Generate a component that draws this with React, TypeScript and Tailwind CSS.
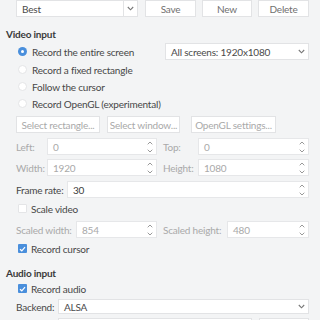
import React from "react";

const Chevron = () => (
  <svg width="7" height="5" viewBox="0 0 7 5">
    <path d="M0.8 1 L3.5 3.8 L6.2 1" fill="none" stroke="#777" strokeWidth="1.1" />
  </svg>
);

const SpinArrows = () => (
  <div className="flex flex-col items-center justify-center gap-[4px] pr-[3px]">
    <svg width="6" height="4" viewBox="0 0 6 4">
      <path d="M0.7 3.3 L3 1 L5.3 3.3" fill="none" stroke="#999" strokeWidth="1" />
    </svg>
    <svg width="6" height="4" viewBox="0 0 6 4">
      <path d="M0.7 0.7 L3 3 L5.3 0.7" fill="none" stroke="#999" strokeWidth="1" />
    </svg>
  </div>
);

function Combo({ text, className = "", sep = false }: { text: string; className?: string; sep?: boolean }) {
  return (
    <div className={`flex h-full items-center justify-between border border-[#e2e3e5] bg-white pl-[5px] ${className}`}>
      <span className="text-[#4a4a4a]">{text}</span>
      <div className={`flex h-full items-center px-[3px] ${sep ? "border-l border-[#e2e3e5]" : ""}`}>
        <Chevron />
      </div>
    </div>
  );
}

function Btn({ text, className = "", dim = false }: { text: string; className?: string; dim?: boolean }) {
  return (
    <div className={`flex h-full items-center justify-center border border-[#e2e3e5] bg-white ${dim ? "text-[#a9a9a9]" : "text-[#707070]"} ${className}`}>
      {text}
    </div>
  );
}

function Spin({ value, className = "", dim = true }: { value: string; className?: string; dim?: boolean }) {
  return (
    <div className={`flex h-full items-center justify-between border border-[#e6e7e9] bg-white pl-[5px] ${className}`}>
      <span className={dim ? "text-[#a9a9a9]" : "text-[#3c3c3c]"}>{value}</span>
      <SpinArrows />
    </div>
  );
}

function Radio({ label, checked = false }: { label: string; checked?: boolean }) {
  return (
    <div className="flex h-[17px] items-center pl-[18px]">
      {checked ? (
        <div className="flex h-[9px] w-[9px] items-center justify-center rounded-full bg-[#4a8fdc]">
          <div className="h-[3px] w-[3px] rounded-full bg-white" />
        </div>
      ) : (
        <div className="h-[9px] w-[9px] rounded-full border border-[#e4e5e7] bg-white" />
      )}
      <span className="ml-[5px] text-[#474747]">{label}</span>
    </div>
  );
}

function Check({ label, checked = false }: { label: string; checked?: boolean }) {
  return (
    <div className="flex h-[17px] items-center pl-[18px]">
      {checked ? (
        <div className="flex h-[9px] w-[9px] items-center justify-center rounded-[1px] bg-[#4a8fdc]">
          <svg width="7" height="6" viewBox="0 0 7 6">
            <path d="M1 3.2 L2.8 4.8 L6 1.2" fill="none" stroke="white" strokeWidth="1.2" />
          </svg>
        </div>
      ) : (
        <div className="h-[9px] w-[9px] rounded-[1px] border border-[#e4e5e7] bg-white" />
      )}
      <span className="ml-[4px] text-[#474747]">{label}</span>
    </div>
  );
}

export default function App() {
  return (
    <div
      className="h-[320px] w-[320px] overflow-hidden whitespace-nowrap bg-[#f3f4f5] text-[10px] leading-none tracking-[-0.2px]"
      style={{ fontFamily: 'Lato, "Noto Sans", sans-serif' }}
    >
      {/* presets */}
      <div className="flex h-[17px] pl-[16px]">
        <Combo text="Best" className="w-[122px]" sep />
        <Btn text="Save" className="ml-[7px] w-[51px]" />
        <Btn text="New" className="ml-[6px] w-[50px]" />
        <Btn text="Delete" className="ml-[6px] w-[51px]" />
      </div>

      <div className="mt-[9px] flex h-[16px] items-center pl-[6px] font-bold text-[#3a3a3a]">Video input</div>

      <div className="mt-[1px] flex h-[17px] items-center">
        <div className="w-[165px]">
          <Radio label="Record the entire screen" checked />
        </div>
        <Combo text="All screens: 1920x1080" className="h-[16px] w-[144px]" />
      </div>
      <div className="mt-[1px]">
        <Radio label="Record a fixed rectangle" />
      </div>
      <Radio label="Follow the cursor" />
      <Radio label="Record OpenGL (experimental)" />

      <div className="mt-[4px] flex h-[17px] pl-[16px]">
        <Btn text="Select rectangle..." dim className="w-[84px]" />
        <Btn text="Select window..." dim className="ml-[7px] w-[73px]" />
        <Btn text="OpenGL settings..." dim className="ml-[11px] w-[85px]" />
      </div>

      <div className="mt-[5px] flex h-[17px] text-[#a9a9a9]">
        <div className="flex w-[163px] items-center pl-[16px]">
          <span className="w-[31px]">Left:</span>
          <Spin value="0" className="w-[110px]" />
        </div>
        <div className="flex items-center">
          <span className="w-[35px]">Top:</span>
          <Spin value="0" className="w-[111px]" />
        </div>
      </div>

      <div className="mt-[4px] flex h-[17px] text-[#a9a9a9]">
        <div className="flex w-[163px] items-center pl-[16px]">
          <span className="w-[31px]">Width:</span>
          <Spin value="1920" className="w-[110px]" />
        </div>
        <div className="flex items-center">
          <span className="w-[35px]">Height:</span>
          <Spin value="1080" className="w-[111px]" />
        </div>
      </div>

      <div className="mt-[5px] flex h-[17px] items-center pl-[16px]">
        <span className="w-[51px] text-[#474747]">Frame rate:</span>
        <Spin value="30" dim={false} className="w-[242px] border-[#dde3ec]" />
      </div>

      <div className="mt-[2px]">
        <Check label="Scale video" />
      </div>

      <div className="mt-[4px] flex h-[17px] text-[#a9a9a9]">
        <div className="flex w-[163px] items-center pl-[16px]">
          <span className="w-[60px]">Scaled width:</span>
          <Spin value="854" className="w-[81px]" />
        </div>
        <div className="flex items-center">
          <span className="w-[64px]">Scaled height:</span>
          <Spin value="480" className="w-[82px]" />
        </div>
      </div>

      <div className="mt-[2px]">
        <Check label="Record cursor" checked />
      </div>

      <div className="mt-[8px] flex h-[15px] items-center pl-[6px] font-bold text-[#3a3a3a]">Audio input</div>

      <Check label="Record audio" checked />

      <div className="mt-[2px] flex h-[15px] items-center pl-[16px]">
        <span className="w-[42px] text-[#474747]">Backend:</span>
        <Combo text="ALSA" className="w-[251px]" />
      </div>

      <div className="mt-[4px] flex h-[17px] pl-[58px]">
        <div className="w-[194px] border border-[#e2e3e5] bg-white" />
        <div className="ml-[7px] w-[50px] border border-[#e2e3e5] bg-white" />
      </div>
    </div>
  );
}
